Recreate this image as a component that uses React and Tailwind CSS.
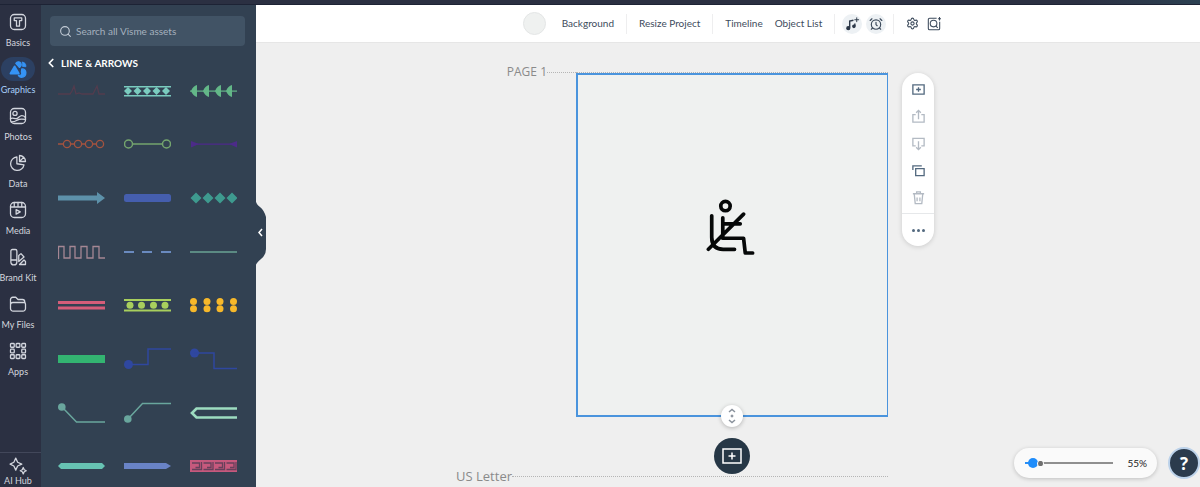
import React, { useState } from "react";
import { ChevronLeft, Search, Settings, AlarmClock } from "lucide-react";

const line = {
  fill: "none",
  stroke: "currentColor",
  strokeWidth: 1.7,
  strokeLinecap: "round",
  strokeLinejoin: "round",
};

const NavIcon = ({ children }) => (
  <svg viewBox="0 0 24 24" className="h-[18px] w-[18px]" {...line}>
    {children}
  </svg>
);

const navItems = [
  {
    label: "Basics",
    icon: (
      <NavIcon>
        <rect x="2" y="2" width="20" height="20" rx="5" />
        <path d="M7 6.500h10v3.600h-3v7.400h-4v-7.400H7z" />
      </NavIcon>
    ),
  },
  {
    label: "Graphics",
    active: true,
    icon: (
      <NavIcon>
        <path d="M7.500 8.500 13 18H2z" fill="currentColor" strokeWidth="2.500" />
        <path d="M9 4.500C10.500 2 14.500 1.500 16 4.500c.8 2 0 4-2 5.500z" fill="currentColor" strokeWidth="1.500" />
        <path d="M18 3c3 0 5 2.500 4.500 6l-4.500-.5c-1-1.500.5-3 0-5.500z" fill="currentColor" strokeWidth="1" />
        <path d="M17 12c3-.5 5.500 1.500 5.500 5s-2.500 6-6 6c-2 0-3.500-1-4-2.500 4 .5 5.500-2 4-4.500z" fill="currentColor" />
      </NavIcon>
    ),
  },
  {
    label: "Photos",
    icon: (
      <NavIcon>
        <rect x="2" y="2" width="20" height="20" rx="5" />
        <circle cx="8" cy="8.500" r="2.800" />
        <path d="M2 15.500c3-2 5 .5 8 0s4-4 7-4 4 1.500 5 2.500M3 20c5 0 6-1 8-2.500s5-2 11-1" />
      </NavIcon>
    ),
  },
  {
    label: "Data",
    icon: (
      <NavIcon>
        <path d="M10.500 4a9 9 0 1 0 9.500 10.500l-9.500-1.500z" />
        <path d="M14 2a8 8 0 0 1 8 8h-8zM14 10l5.500-5.500" />
      </NavIcon>
    ),
  },
  {
    label: "Media",
    icon: (
      <NavIcon>
        <rect x="2" y="2" width="20" height="20" rx="5" />
        <path d="M2 8h20M7 2v6M12 2v6M17 2v6M9.500 11.500v6l5.500-3z" />
      </NavIcon>
    ),
  },
  {
    label: "Brand Kit",
    icon: (
      <NavIcon>
        <path d="M4.500 2h4a2 2 0 0 1 2 2v14.500a4 4 0 0 1-8 0V4a2 2 0 0 1 2-2zM2.500 16h8" />
        <path d="m13 10 3-2.500 4 4.500-7 6zM14 22l6-6 2 2v4z" />
      </NavIcon>
    ),
  },
  {
    label: "My Files",
    icon: (
      <NavIcon>
        <path d="M2 18V6a3 3 0 0 1 3-3h4l3 3h6a3 3 0 0 1 3 3v1M5 10h15a2 2 0 0 1 2 2v6a3.500 3.500 0 0 1-3.500 3.500h-13A3.500 3.500 0 0 1 2 18v-5a3 3 0 0 1 3-3z" />
      </NavIcon>
    ),
  },
  {
    label: "Apps",
    icon: (
      <NavIcon>
        {[2, 9.5, 17].map((x) =>
          [2, 9.5, 17].map((y) =>
            x === 9.5 && y === 9.5 ? null : (
              <rect key={`${x}-${y}`} x={x} y={y} width="5" height="5" rx="1" />
            ),
          ),
        )}
      </NavIcon>
    ),
  },
];

const diamond = (x, y, r) => `M${x - r} ${y}L${x} ${y - r}L${x + r} ${y}L${x} ${y + r}z`;

// Each drawing sits in a 47x26 box with its axis at y=13
const lineAssets = [
  {
    name: "Heartbeat",
    art: <path d="M0 16h12l2-3 2-5 2 8 3-1 3 1h11l2-4 2-4 2 8h6" fill="none" stroke="#533c4e" strokeWidth="1.300" />,
  },
  {
    name: "Diamond rail",
    art: (
      <g fill="#7accbf">
        <rect y="8" width="47" height="1.500" />
        <rect y="17" width="47" height="1.500" />
        {[4, 13.5, 23, 32.5, 42].map((x) => (
          <path key={x} d={diamond(x, 13, 4)} />
        ))}
      </g>
    ),
  },
  {
    name: "Leaves",
    art: (
      <g fill="#63b788">
        <rect y="12.500" width="47" height="1.200" />
        {[1, 13, 25, 36].map((x) => (
          <path key={x} d={`M${x} 13q2-5 6-6v12q-4-1-6-6z`} />
        ))}
      </g>
    ),
  },
  {
    name: "Chain",
    art: (
      <g fill="none" stroke="#a4533f" strokeWidth="1.300">
        {[9, 20, 31, 42].map((x) => (
          <circle key={x} cx={x} cy="13" r="3.600" />
        ))}
        <path d="M0 13h5.500M12.500 13h4M23.500 13h4M34.500 13h4" />
      </g>
    ),
  },
  {
    name: "Ring ends",
    art: (
      <g fill="none" stroke="#74a56e" strokeWidth="1.500">
        <circle cx="4.500" cy="13" r="4" />
        <circle cx="42.500" cy="13" r="4" />
        <path d="M8.500 13h30" />
      </g>
    ),
  },
  {
    name: "Purple arrows",
    art: (
      <g fill="#4c2b88">
        <rect x="2" y="12.500" width="43" height="1.300" />
        <path d="M1 10l8 3-8 3.500zM47 10l-8 3 8 3.500z" />
      </g>
    ),
  },
  { name: "Arrow", art: <path d="M0 10.500h39V7l8 6-8 6v-3.500H0z" fill="#5d91aa" /> },
  { name: "Thick bar", art: <rect y="9" width="47" height="8" rx="2.500" fill="#455eae" /> },
  {
    name: "Diamonds",
    art: <path d={[6, 18, 30, 42].map((x) => diamond(x, 13, 5.5)).join("")} fill="#3e9a8f" />,
  },
  {
    name: "Square wave",
    art: (
      <path
        d="M.5 20V7.500H6V19h6V7.500h5V19h6V7.500h6V19h6V7.500h6V19h6"
        fill="none"
        stroke="#a58794"
        strokeWidth="1.300"
      />
    ),
  },
  { name: "Dashes", art: <path d="M0 13h10M18 13h10M37 13h10" stroke="#6a8abf" strokeWidth="2" /> },
  { name: "Thin line", art: <rect y="12" width="47" height="2" fill="#5b8a83" /> },
  {
    name: "Double line",
    art: (
      <g fill="#d45d79">
        <rect y="9" width="47" height="3" />
        <rect y="14.500" width="47" height="3" />
      </g>
    ),
  },
  {
    name: "Dotted rail",
    art: (
      <g fill="#a8cf5d">
        <rect y="7" width="47" height="2" />
        <rect y="17.500" width="47" height="2" />
        {[6, 17.5, 29.5, 41].map((x) => (
          <circle key={x} cx={x} cy="13.200" r="3.500" />
        ))}
      </g>
    ),
  },
  {
    name: "Double dots",
    art: (
      <g fill="#f7b82a">
        {[3.5, 17, 30, 43.5].map((x) => (
          <React.Fragment key={x}>
            <circle cx={x} cy="9.500" r="3.500" />
            <circle cx={x} cy="16.800" r="3.500" />
          </React.Fragment>
        ))}
      </g>
    ),
  },
  { name: "Green bar", art: <rect y="9" width="47" height="8" fill="#33b471" /> },
  {
    name: "Step up",
    art: (
      <g>
        <circle cx="4.500" cy="18.500" r="4.500" fill="#2f479f" />
        <path d="M4 18.500h20V3h23" fill="none" stroke="#2f479f" strokeWidth="1.500" />
      </g>
    ),
  },
  {
    name: "Step down",
    art: (
      <g>
        <circle cx="4.500" cy="7" r="4.500" fill="#2f479f" />
        <path d="M4 7h20v15.500h23" fill="none" stroke="#2f479f" strokeWidth="1.500" />
      </g>
    ),
  },
  {
    name: "Callout down",
    art: (
      <g>
        <circle cx="3.800" cy="7" r="3.800" fill="#69a69d" />
        <path d="M4 7l14.500 15H47" fill="none" stroke="#69a69d" strokeWidth="1.500" />
      </g>
    ),
  },
  {
    name: "Callout up",
    art: (
      <g>
        <circle cx="3.800" cy="19" r="3.800" fill="#69a69d" />
        <path d="M4 19L18.500 3.500H47" fill="none" stroke="#69a69d" strokeWidth="1.500" />
      </g>
    ),
  },
  {
    name: "Ribbon",
    art: <path d="M47 8.500H6.500L2 13l4.500 4.500H47" fill="none" stroke="#9ddcc0" strokeWidth="2.700" />,
  },
  { name: "Hexagon bar", art: <path d="M3 10h41l3 3-3 3H3l-3-3z" fill="#67c3b3" /> },
  { name: "Pointed bar", art: <path d="M0 10h42l5 3-5 3H0z" fill="#6983c6" /> },
  {
    name: "Greek key",
    art: (
      <g>
        <rect y="7" width="47" height="12" fill="#c6597d" />
        {[2, 13.5, 25, 36.5].map((x) => (
          <path
            key={x}
            d={`M${x} 10h7.500v4.500h-4M${x} 16.500h9.500V9`}
            fill="none"
            stroke="#66405b"
            strokeWidth="1.300"
          />
        ))}
      </g>
    ),
  },
];

const pageActions = [
  {
    label: "Add page",
    tone: "text-[#53697f]",
    art: <path d="M2 3h12v10H2zM8 5.500v5M5.500 8h5" />,
  },
  {
    label: "Move page up",
    tone: "text-[#b3bac3]",
    art: <path d="M5 6H2v8h12V6h-3M8 11V1.500M5.500 4 8 1.500 10.500 4" />,
  },
  {
    label: "Move page down",
    tone: "text-[#b3bac3]",
    art: <path d="M5 10.500H2V2.500h12v8h-3M8 5.500v9M5.500 12 8 14.500l2.500-2.500" />,
  },
  {
    label: "Duplicate page",
    tone: "text-[#53697f]",
    art: <path d="M5 6h9v7.500H5zM2 7.500V3h9.500" />,
  },
  {
    label: "Delete page",
    tone: "text-[#b3bac3]",
    art: <path d="M2 4h12M3.500 4.500 4.500 14.500h7l1-10M6 3.500V2h4v1.500M6.500 8v4M9.500 8v4" />,
  },
];

const Divider = () => <span className="h-5 w-px bg-[#eeeeef]" />;

const SideNav = () => (
  <nav className="flex w-[41px] shrink-0 flex-col bg-[#2b3042] pt-[5px]">
    {navItems.map(({ label, icon, active }) => (
      <button
        key={label}
        type="button"
        className="flex h-[47px] w-9 shrink-0 flex-col items-center gap-px whitespace-nowrap text-[9px] leading-4 text-[#d3d6de]"
      >
        <span
          className={
            active
              ? "flex h-6 w-[34px] items-center justify-center rounded-full bg-[#2c4062] text-[#3593f5]"
              : "flex h-6 w-[34px] items-center justify-center"
          }
        >
          {icon}
        </span>
        <span className={active ? "text-[#a9d0fb]" : ""}>{label}</span>
      </button>
    ))}
    <div className="mt-auto shrink-0 border-t border-[#42475a]">
      <button
        type="button"
        className="flex w-9 flex-col items-center whitespace-nowrap pt-1 text-[9px] leading-3 text-[#d3d6de]"
      >
        <NavIcon>
          <path d="M9 1.500 11.500 7 17 9.500 11.500 12 9 17.500 6.500 12 1.500 9.500 6.500 7zM19 14l1.300 3 2.700 1.300-2.700 1.300L19 22.500l-1.300-2.900L15 18.300l2.700-1.300z" />
        </NavIcon>
        AI Hub
      </button>
    </div>
  </nav>
);

const AssetPanel = () => (
  <aside className="relative z-10 w-[215px] shrink-0 bg-[#324152]">
    <div className="h-full overflow-hidden pt-[11px]">
      <label className="ml-[9px] mr-[11px] flex h-[30px] items-center gap-1 rounded bg-[#415365] px-[9px] text-[#c3ccd6]">
        <Search size={13} strokeWidth={2} />
        <input
          type="search"
          aria-label="Search all Visme assets"
          placeholder="Search all Visme assets"
          className="min-w-0 flex-1 bg-transparent text-[10px] outline-none placeholder:text-[#a5b1be]"
        />
      </label>
      <button
        type="button"
        className="mt-2 flex h-[18px] items-center gap-[3px] pl-[3px] text-[10px] font-bold text-white"
      >
        <ChevronLeft size={14} strokeWidth={3} />
        LINE &amp; ARROWS
      </button>
      <div className="-mt-2 grid h-[429px] grid-cols-3 grid-rows-8 pl-[7px] pr-[10px]">
        {lineAssets.map(({ name, art }) => (
          <button key={name} type="button" aria-label={name} className="flex items-center justify-center">
            <svg viewBox="0 0 47 26" className="h-[26px] w-[47px]">
              {art}
            </svg>
          </button>
        ))}
      </div>
    </div>
    {/* collapse handle */}
    <button
      type="button"
      aria-label="Collapse panel"
      className="absolute left-full top-[194px] h-[68px] w-[11px]"
    >
      <svg viewBox="0 0 11 68" className="h-[68px] w-[11px] overflow-visible">
        <path d="M-1 0Q0 5 4 8t6 10v32q0 6-5 10t-6 8z" fill="#324152" />
        <path d="m6 30-3 3.500 3 3.500" fill="none" stroke="#fff" strokeWidth="1.500" />
      </svg>
    </button>
  </aside>
);

const Toolbar = () => (
  <header className="flex h-[38px] shrink-0 items-center justify-center whitespace-nowrap border-b border-[#e6e6e6] bg-white pl-2 text-[10px] text-[#3d4b5c]">
    <button type="button" className="flex items-center gap-4">
      <span className="h-[23px] w-[23px] rounded-full border border-[#e4e6e6] bg-[#eff1f0]" />
      Background
    </button>
    <div className="flex items-center gap-3 pl-3">
      <Divider />
      <button type="button">Resize Project</button>
      <Divider />
      <button type="button">Timeline</button>
      <button type="button">Object List</button>
      <Divider />
    </div>
    <div className="flex items-center gap-1 px-[7px]">
      <button
        type="button"
        aria-label="Add music"
        className="flex h-5 w-5 items-center justify-center rounded-full bg-[#edf1f4]"
      >
        <svg viewBox="0 0 16 16" className="h-[15px] w-[15px]" fill="none" stroke="#2b3747" strokeWidth="1.500">
          <path d="M5 12.500V5.500l4-1M10.500 11V8" />
          <path d="M12.500 1.500v5M10 4h5" strokeWidth="1" />
          <circle cx="3.500" cy="13" r="1.500" fill="#2b3747" />
          <circle cx="9.500" cy="11" r="1.200" fill="#2b3747" />
        </svg>
      </button>
      <button
        type="button"
        aria-label="Timer"
        className="flex h-5 w-5 items-center justify-center rounded-full bg-[#edf1f4]"
      >
        <AlarmClock size={14} />
      </button>
    </div>
    <div className="flex items-center">
      <Divider />
      <button type="button" aria-label="Settings" className="ml-3">
        <Settings size={13} />
      </button>
      <button type="button" aria-label="Find in project" className="ml-2">
        <svg viewBox="0 0 16 16" className="h-[14px] w-[14px]" fill="none" stroke="currentColor" strokeWidth="1.200">
          <path d="M11 1.500H3A1.500 1.500 0 0 0 1.500 3v10A1.500 1.500 0 0 0 3 14.500h10a1.500 1.500 0 0 0 1.500-1.500V5.500M12.500 2h3.500M14.300 0v4" />
          <circle cx="7.500" cy="7.500" r="3.800" />
          <path d="m10.300 10.300 2 2" />
        </svg>
      </button>
    </div>
  </header>
);

const PageActions = () => (
  <div className="flex w-8 flex-col items-center rounded-full bg-white pt-[3px] shadow-[0_1px_5px_rgba(0,0,0,0.15)]">
    {pageActions.map(({ label, tone, art }) => (
      <button
        key={label}
        type="button"
        aria-label={label}
        className={`flex h-[27px] w-full items-center justify-center ${tone}`}
      >
        <svg viewBox="0 0 16 16" className="h-[15px] w-[15px]" fill="none" stroke="currentColor" strokeWidth="1.400">
          {art}
        </svg>
      </button>
    ))}
    <span className="mt-[2px] h-px w-full bg-[#e6e8ea]" />
    <button
      type="button"
      aria-label="More"
      className="flex h-8 w-full items-center justify-center gap-[2px] text-[#53697f]"
    >
      <span className="h-[3px] w-[3px] rounded-full bg-current" />
      <span className="h-[3px] w-[3px] rounded-full bg-current" />
      <span className="h-[3px] w-[3px] rounded-full bg-current" />
    </button>
  </div>
);

const Canvas = () => (
  <section className="flex-1 overflow-hidden pl-2 pt-[21px] font-['Open_Sans',sans-serif] text-[12px] leading-4 text-[#8a8a8a]">
    <div className="grid grid-cols-[1fr_312px_1fr]">
      <div className="flex h-4 items-center justify-end">
        <span>PAGE 1</span>
        <span className="w-[29px] border-t border-dotted border-[#b5b5b5]" />
      </div>
      <div className="relative mt-2">
        <div className="border-t border-dotted border-[#b5b5b5]" />
        <div className="flex h-[344px] items-center justify-center border-2 border-r border-[#4a94dd] bg-[#eff1f0] pb-9 pr-1">
          <svg
            viewBox="78 54 146 170"
            className="h-[57px] w-[49px]"
            fill="none"
            stroke="#060808"
            strokeWidth="11"
            strokeLinecap="round"
            strokeLinejoin="round"
          >
            <circle cx="136" cy="75" r="14" />
            <path d="M95 104v64q0 36 34 36h34" />
            <path d="M128 110v61h62l5 44h22M128 128h52M85 204 190 99" />
          </svg>
        </div>
        <button
          type="button"
          aria-label="Resize page height"
          className="absolute -bottom-[10px] left-1/2 flex h-[22px] w-[22px] -translate-x-1/2 items-center justify-center rounded-full bg-white text-[#8a929c] shadow-[0_1px_4px_rgba(0,0,0,0.25)]"
        >
          <svg viewBox="0 0 12 16" className="h-4 w-3" fill="none" stroke="currentColor" strokeWidth="1.500">
            <path d="m3 4 3-2.500L9 4M3 12l3 2.500L9 12" />
            <circle cx="6" cy="8" r="1" fill="currentColor" strokeWidth="1" />
          </svg>
        </button>
      </div>
      <div className="pl-[14px] pt-[9px]">
        <PageActions />
      </div>
    </div>
    <div className="grid grid-cols-[1fr_312px_1fr] pt-[21px]">
      <button
        type="button"
        aria-label="Add new page"
        className="col-start-2 flex h-9 w-9 items-center justify-center justify-self-center rounded-full bg-[#263746] text-white"
      >
        <svg viewBox="0 0 20 16" className="h-4 w-5" fill="none" stroke="currentColor" strokeWidth="1.500">
          <path d="M1 1h18v14H1zM10 4.500v7M6.500 8h7" />
        </svg>
      </button>
    </div>
    <div className="-mt-[6px] grid grid-cols-[1fr_312px_1fr] items-center">
      <div className="flex items-center justify-end text-[13px]">
        <span>US Letter</span>
        <span className="w-16 border-t border-dotted border-[#b5b5b5]" />
      </div>
      <span className="border-t border-dotted border-[#b5b5b5]" />
    </div>
  </section>
);

const ZoomControls = () => {
  const [zoom, setZoom] = useState(55);

  return (
    <div className="absolute bottom-2 right-0 flex items-center gap-[11px]">
      <label className="flex h-[30px] items-center gap-[14px] rounded-full bg-[#fafafa] pl-[11px] pr-[10px] shadow-[0_1px_4px_rgba(0,0,0,0.2)]">
        <span className="relative flex items-center">
          <input
            type="range"
            aria-label="Zoom"
            min="45"
            max="400"
            value={zoom}
            onChange={(e) => setZoom(Number(e.target.value))}
            className="h-3 w-[88px] appearance-none bg-transparent bg-[linear-gradient(to_right,#2a8ff5_8%,#8f8f8f_8%)] bg-[length:100%_2px] bg-center bg-no-repeat [&::-webkit-slider-thumb]:h-[10px] [&::-webkit-slider-thumb]:w-[10px] [&::-webkit-slider-thumb]:appearance-none [&::-webkit-slider-thumb]:rounded-full [&::-webkit-slider-thumb]:bg-[#1e8cfa]"
          />
          <span className="pointer-events-none absolute left-[12px] h-[5px] w-[7px] rounded-full border-x border-[#fafafa] bg-[#6f6f6f]" />
        </span>
        <span className="font-['Lato',sans-serif] text-[10px] text-[#222]">{zoom}%</span>
      </label>
      <button
        type="button"
        aria-label="Help"
        className="flex h-8 w-8 items-center justify-center rounded-full border-2 border-[#bcd2ea] bg-[#2b3b4d] font-['Open_Sans',sans-serif] text-[17px] font-bold leading-none text-white"
      >
        ?
      </button>
    </div>
  );
};

const App = () => (
  <div className="relative flex h-screen flex-col overflow-hidden bg-[#efefef] font-[Lato,sans-serif]">
    <div className="h-[5px] shrink-0 border-b border-[#1d2335] bg-linear-to-r from-[#2b3042] from-90% to-[#2c4152]" />
    <div className="flex min-h-0 flex-1">
      <SideNav />
      <AssetPanel />
      <main className="flex min-w-0 flex-1 flex-col">
        <Toolbar />
        <Canvas />
      </main>
    </div>
    <ZoomControls />
  </div>
);

export default App;
